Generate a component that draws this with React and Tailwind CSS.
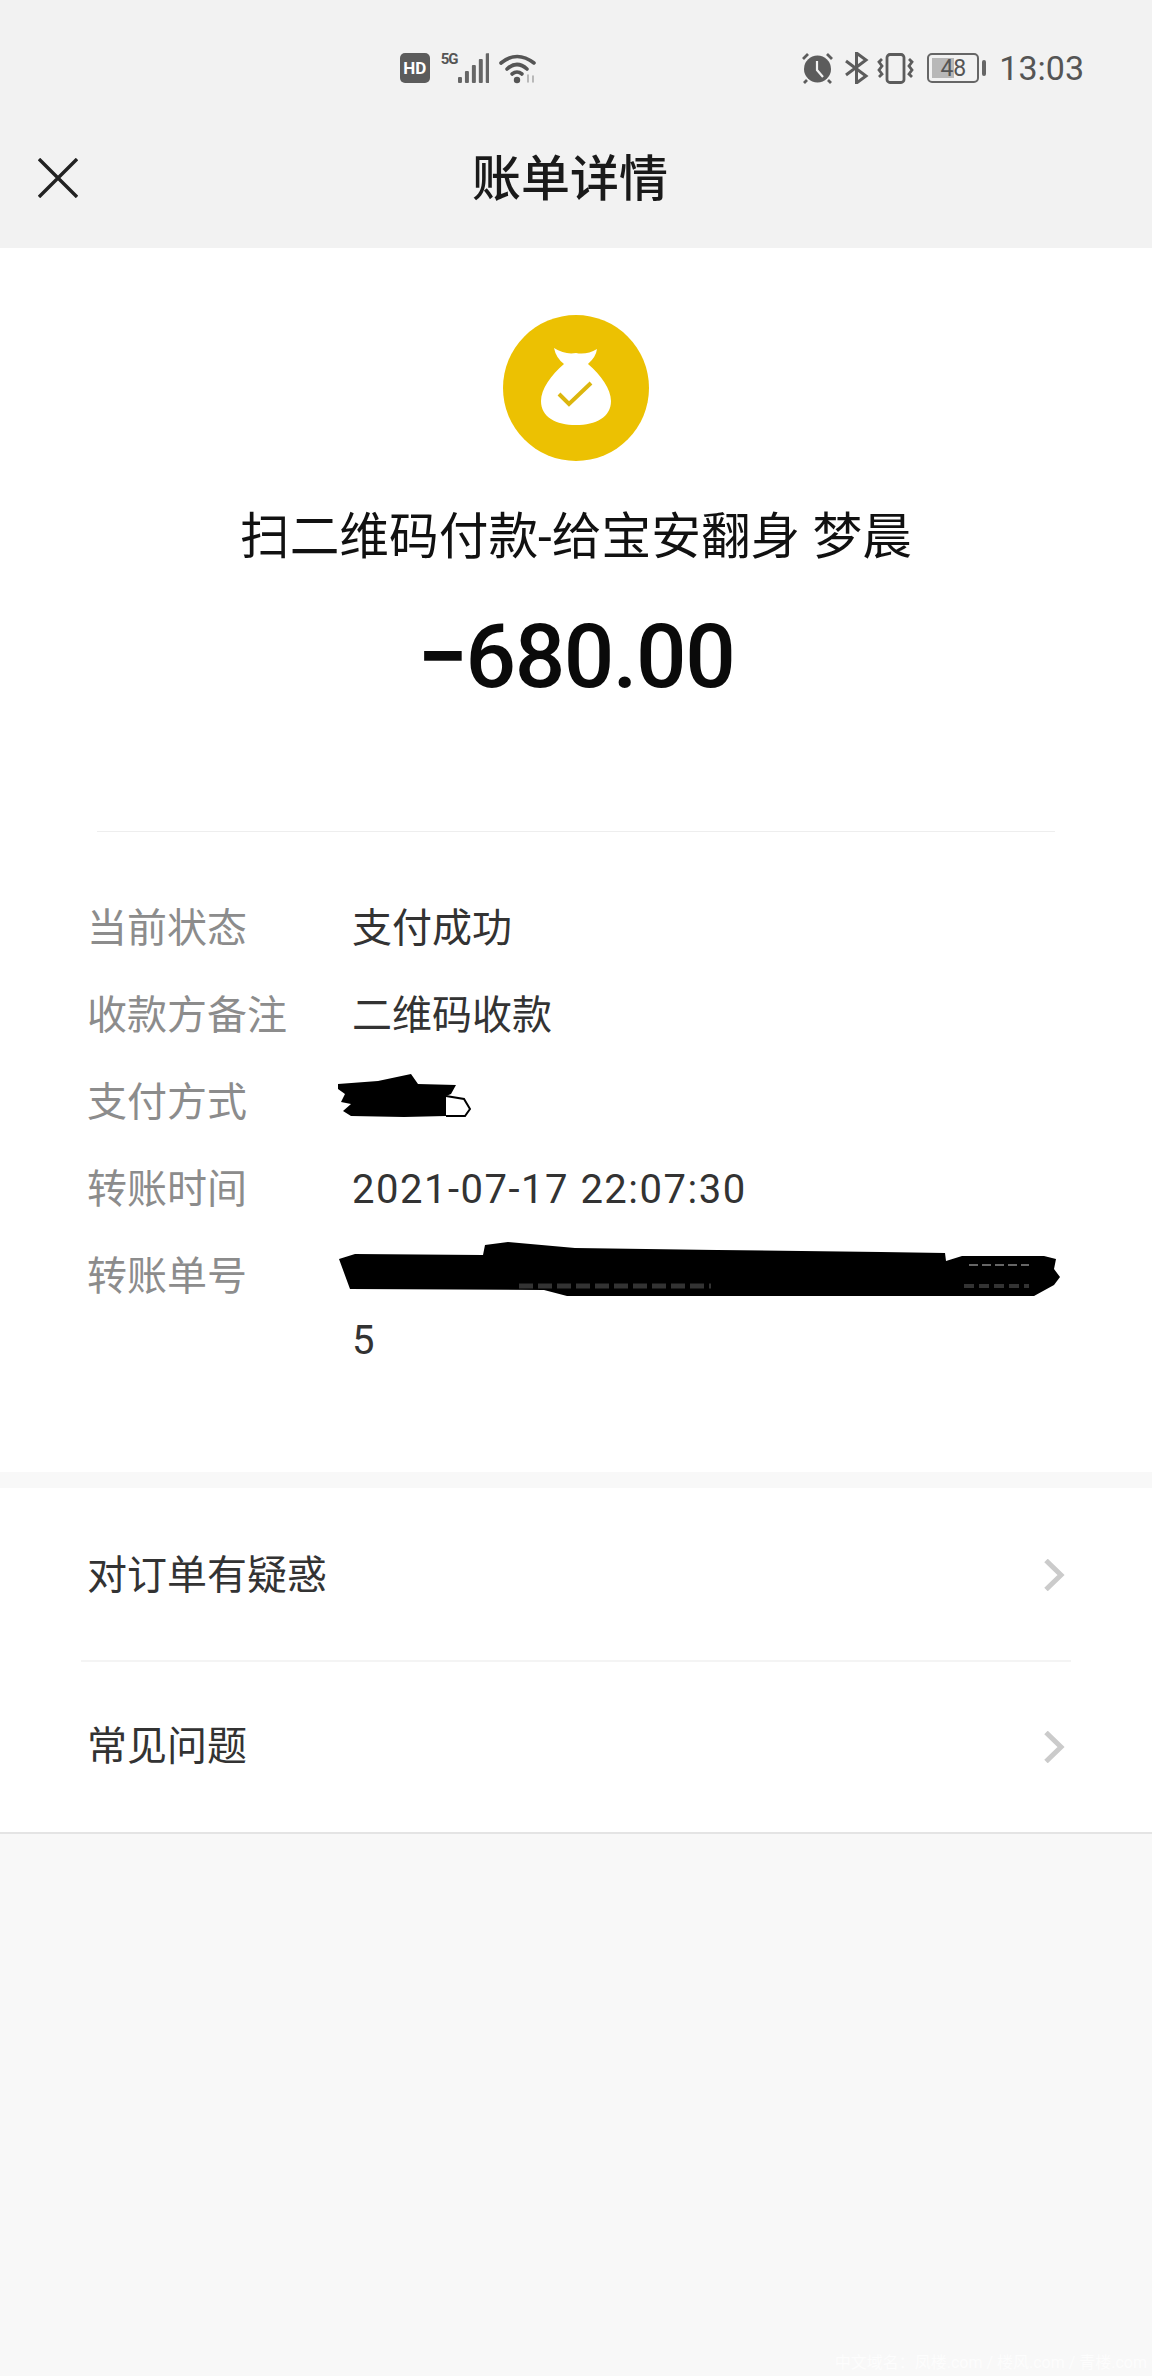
const cjk = { fontFamily: 'Roboto, "Noto Sans CJK SC", sans-serif' };

function Wifi() {
  return (
    <svg width="38" height="31" viewBox="0 0 38 31" fill="none" stroke="#555" strokeLinecap="round" strokeWidth="3.6">
      <path d="M2 10 Q18 -3 35 10" />
      <path d="M8 16 Q18 7 28 16" />
      <path d="M13 21 Q18 17 23 21" />
      <circle cx="18" cy="27" r="3.2" fill="#555" stroke="none" />
      <path d="M29 22v7M34 23v6" stroke="#aaa" strokeWidth="1.6" />
    </svg>
  );
}

function Signal() {
  return (
    <svg width="32" height="31" viewBox="0 0 32 31" fill="#666">
      <rect x="0" y="24" width="4" height="6" rx="1" />
      <rect x="7" y="18" width="4" height="12" rx="1" />
      <rect x="14" y="12" width="4" height="18" rx="1" />
      <rect x="21" y="6" width="4" height="24" rx="1" />
      <rect x="28" y="0" width="4" height="30" rx="1" />
    </svg>
  );
}

function Alarm() {
  return (
    <svg width="33" height="31" viewBox="0 0 33 31" fill="none">
      <circle cx="16.5" cy="16" r="13.5" fill="#5c5c5c" />
      <path d="M16 8v9l6 7" stroke="#f2f2f2" strokeWidth="2.2" />
      <path d="M2 6l5-5M31 6l-5-5M6 27l-3 3M27 27l3 3" stroke="#5c5c5c" strokeWidth="2.8" />
    </svg>
  );
}

function Bluetooth() {
  return (
    <svg width="25" height="32" viewBox="0 0 25 32" fill="none" stroke="#5c5c5c" strokeWidth="3">
      <path d="M2 9l20 15-9.5 7V1L22 8 2 23" />
    </svg>
  );
}

function Vibrate() {
  return (
    <svg width="37" height="31" viewBox="0 0 37 31" fill="none" stroke="#5c5c5c" strokeWidth="2.8">
      <rect x="10" y="1.5" width="17" height="28" rx="3" />
      <path d="M5 6 L2 9 L5 13 L2 17 L5 21 L2 24" />
      <path d="M32 6 L35 9 L32 13 L35 17 L32 21 L35 24" />
    </svg>
  );
}

function Battery() {
  return (
    <div className="flex items-center gap-[3px]">
      <div className="relative w-[52px] h-[30px] rounded-[5px] border-[2px] border-[#666] flex items-center justify-center overflow-hidden">
        <div className="absolute left-[3px] top-[3px] bottom-[3px] w-[22px] bg-[#b8b8b8]" />
        <span className="relative text-[23px] leading-none text-[#555]" style={cjk}>48</span>
      </div>
      <div className="w-[4px] h-[16px] rounded-[2px] bg-[#666]" />
    </div>
  );
}

function Chevron() {
  return (
    <svg width="22" height="32" viewBox="0 0 22 32" fill="none" stroke="#cbcbcb" strokeWidth="5">
      <path d="M3 1.5 L18 16 L3 30.5" />
    </svg>
  );
}

function Row({ label, children }) {
  return (
    <div className="flex leading-[64px] mb-[23px]">
      <div className="w-[265px] shrink-0 text-[#8c8c8c]">{label}</div>
      <div className="relative flex-1 text-[#333]">{children}</div>
    </div>
  );
}

function App() {
  return (
    <div className="relative w-[1152px] min-h-[2376px] bg-[#f8f8f8] overflow-hidden" style={cjk}>
      <div className="bg-[#f2f2f2]">
        <div className="h-[108px] pt-[28px] flex items-center pl-[400px] pr-[68px]">
          <div className="w-[30px] h-[30px] rounded-[5px] bg-[#5c5c5c] flex items-center justify-center text-white text-[17px] font-bold leading-none">HD</div>
          <div className="ml-[11px] w-[17px] h-[30px] text-[15px] font-bold leading-[13px] tracking-[-1px] text-[#555]">5G</div>
          <Signal />
          <div className="ml-[10px]"><Wifi /></div>
          <div className="ml-[264px]"><Alarm /></div>
          <div className="ml-[10px]"><Bluetooth /></div>
          <div className="ml-[8px]"><Vibrate /></div>
          <div className="ml-[13px]"><Battery /></div>
          <div className="ml-[13px] text-[34px] leading-none text-[#555]">13:03</div>
        </div>
        <div className="h-[140px] flex items-center pl-[38px]">
          <svg width="40" height="40" viewBox="0 0 40 40" fill="none" stroke="#222" strokeWidth="3.4">
            <path d="M1 1 L39 39 M39 1 L1 39" />
          </svg>
          <div className="ml-[394px] mt-[3px] text-[49px] leading-none font-medium text-[#1a1a1a]">账单详情</div>
        </div>
      </div>

      <div className="bg-white h-[1224px]">
        <div className="pt-[67px] flex flex-col items-center">
          <div className="w-[146px] h-[146px] rounded-full bg-[#ecc102] flex items-center justify-center">
            <svg width="70" height="78" viewBox="0 0 70 78" fill="#fff" className="-mt-[4px]">
              <path d="M13 1 Q24 8 35 6 Q46 8 56 2 Q55 10 47 17 C60 28 70 42 70 54 C70 70 55 78 35 78 C15 78 0 70 0 54 C0 42 10 28 23 17 Q15 11 13 1Z" />
              <path d="M18 47 L28 57 L50 36" fill="none" stroke="#dcb60e" strokeWidth="4" />
            </svg>
          </div>
          <div className="mt-[44px] text-[49.7px] leading-[64px] text-[#111] whitespace-nowrap">扫二维码付款-给宝安翻身 梦晨</div>
          <div className="mt-[38px] text-[89px] leading-[100px] font-medium tracking-[-1.5px] text-[#0a0a0a]"><span className="font-bold">−</span>680.00</div>
        </div>

        <div className="mt-[124px] mx-[97px] h-[1px] bg-[#eeeeee]" />

        <div className="mt-[65px] pl-[87px] text-[40px] h-[574px]">
          <Row label="当前状态">支付成功</Row>
          <Row label="收款方备注">二维码收款</Row>
          <Row label="支付方式">
            <svg width="133" height="43" viewBox="0 0 133 43" fill="#000" className="absolute left-[-14px] top-[3px]">
              <path d="M0 10 L40 7 L73 0 L80 10 L118 11 L113 20 L108 22 L108 42 L66 43 L13 42 L5 37 L13 30 L3 28 L7 20 L0 15Z" />
              <path d="M108 22 L126 25 L132 35 L127 42 L108 42" fill="none" stroke="#000" strokeWidth="2" />
            </svg>
            &nbsp;
          </Row>
          <Row label="转账时间"><span className="tracking-[1.5px]">2021-07-17 22:07:30</span></Row>
          <Row label="转账单号">
            <svg width="724" height="55" viewBox="0 0 724 55" fill="#000" className="absolute left-[-13px] top-[-3px]">
              <path d="M0 17 L16 12 L144 13 L146 3 L169 0 L236 6 L378 8 L542 10 L606 11 L607 19 L623 14 L705 14 L717 17 L715 27 L721 35 L715 43 L695 54 L228 54 L205 48 L11 47Z" />
              <path d="M630 23H690" stroke="#666" strokeWidth="2" strokeDasharray="9 4" fill="none" />
              <path d="M180 44H372" stroke="#333" strokeWidth="5" strokeDasharray="14 5" fill="none" />
              <path d="M625 44H690" stroke="#333" strokeWidth="4" strokeDasharray="10 5" fill="none" />
            </svg>
            <div>&nbsp;</div>
            <div>5</div>
          </Row>
        </div>
      </div>

      <div className="bg-white mt-[16px] border-b-[2px] border-[#e4e4e4] text-[40px] text-[#333] h-[346px]">
        <div className="mx-[81px] h-[174px] border-b-[2px] border-[#f4f4f4] pt-[2px] flex items-center justify-between pl-[6px] pr-[6px]">
          <span className="mt-[1px]">对订单有疑惑</span>
          <Chevron />
        </div>
        <div className="mx-[81px] h-[170px] flex items-center justify-between pl-[6px] pr-[6px]">
          <span>常见问题</span>
          <Chevron />
        </div>
      </div>

      <div className="absolute right-[5px] bottom-[3px] text-[16px] leading-[20px] text-[#fdfdfd] whitespace-nowrap">中文域名：凤楼.com / 楼风.com / 青楼.com</div>
    </div>
  );
}

export default App;
